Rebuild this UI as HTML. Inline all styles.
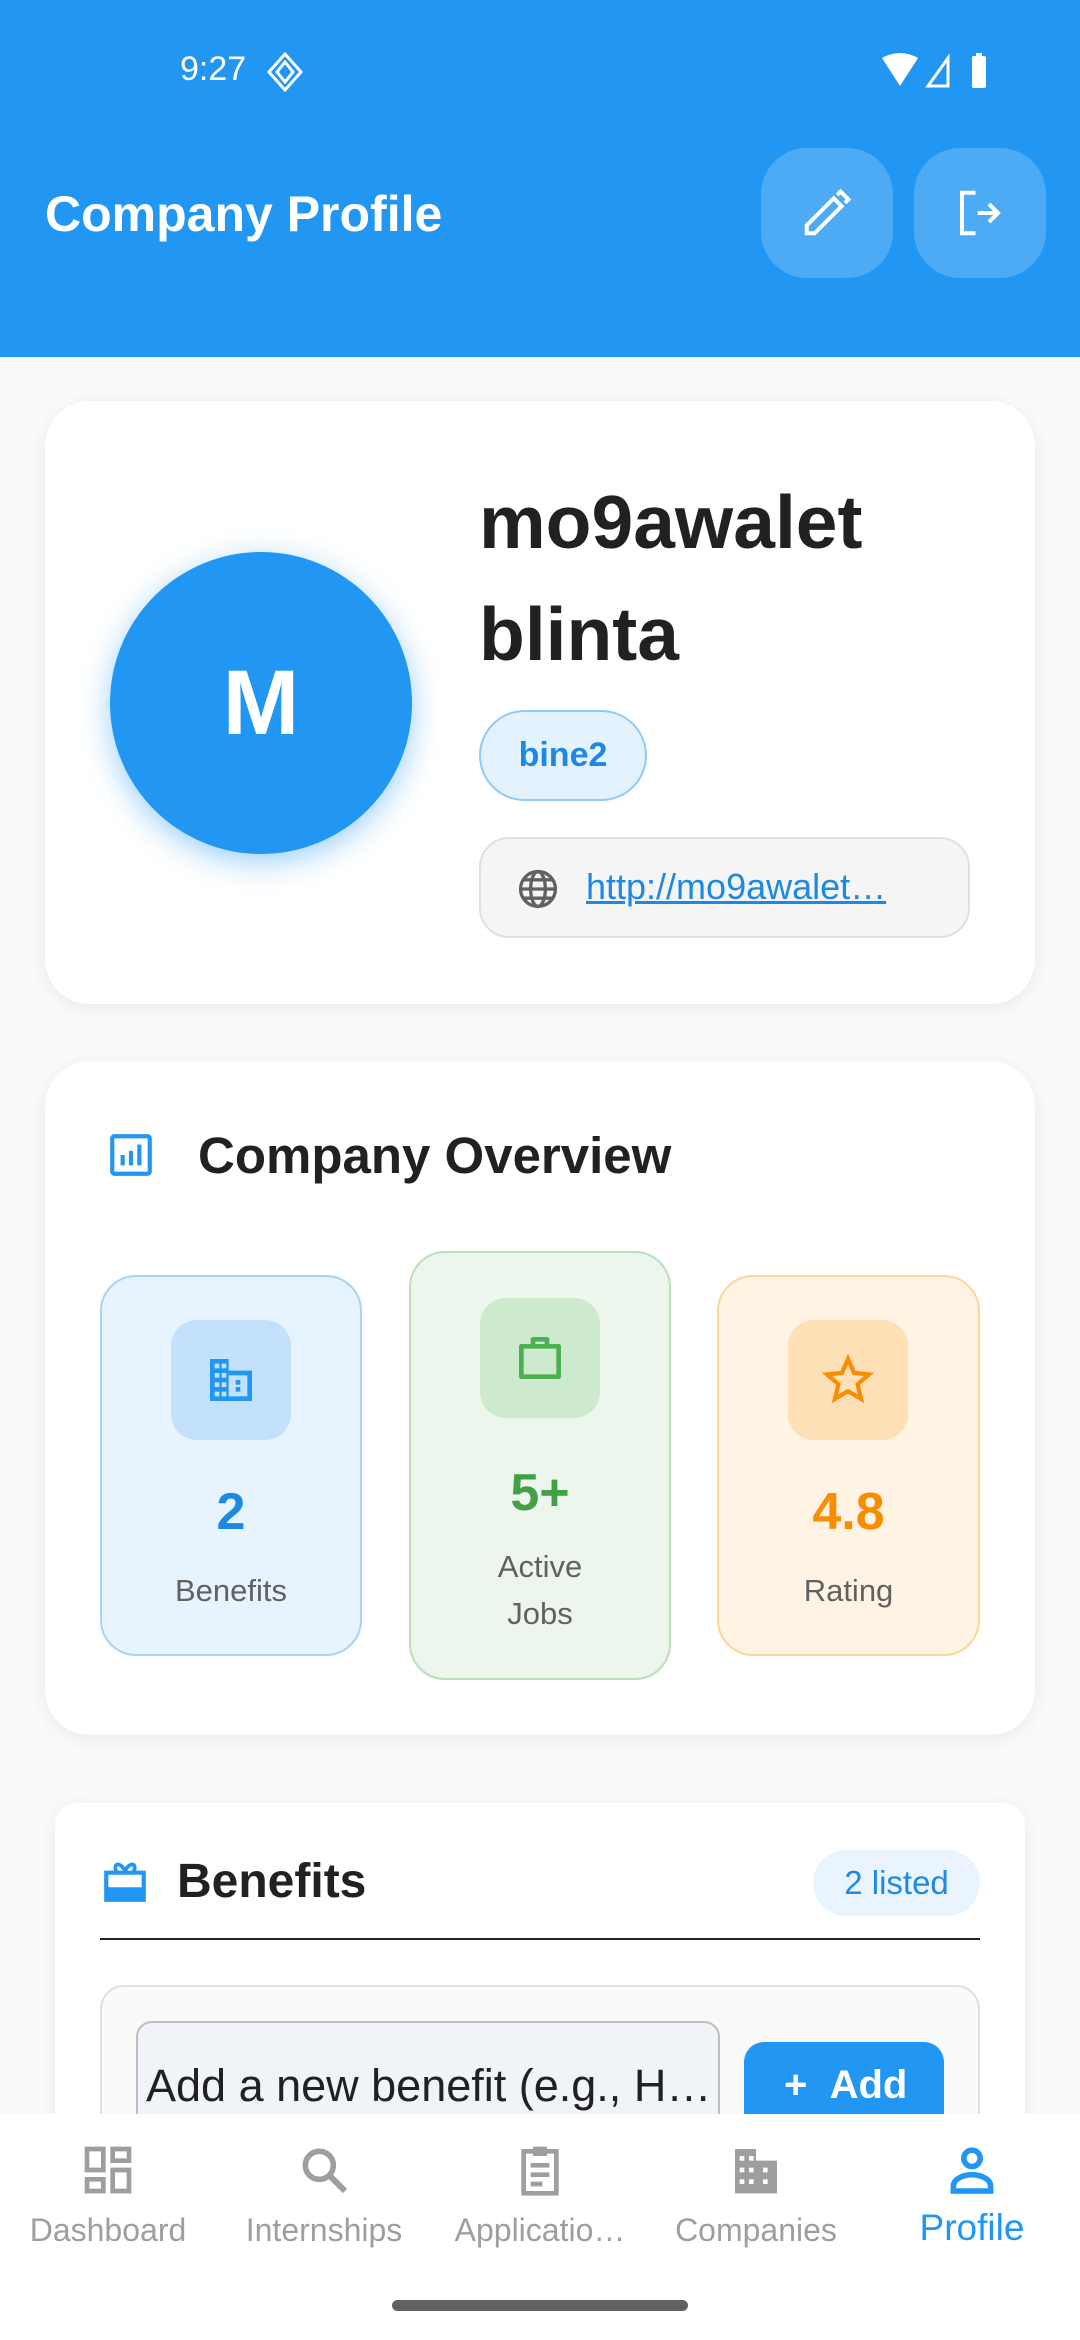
<!DOCTYPE html>
<html><head><meta charset="utf-8"><style>
*{margin:0;padding:0;box-sizing:border-box}
body{width:1080px;height:2340px;background:#FAFAFA;font-family:"Liberation Sans",sans-serif;position:relative;overflow:hidden}
.abs{position:absolute}
.hdr{left:0;top:0;width:1080px;height:357px;background:#2196F3}
.card{background:#fff;border-radius:45px;box-shadow:0 4px 18px rgba(0,0,0,0.07)}
.stat{border-radius:36px;border:2px solid;text-align:center}
.ib{position:absolute;width:120px;height:120px;border-radius:26px;left:69px;display:flex;align-items:center;justify-content:center}
.num{position:absolute;width:100%;font-weight:bold;font-size:52px}
.lbl{position:absolute;width:100%;font-size:31px;color:#616161;line-height:47px}
.nav{left:0;top:2114px;width:1080px;height:226px;background:#fff}
.ni{position:absolute;width:216px;text-align:center;top:0}
.ni svg{position:absolute;left:80px;top:28px}
.ni span{position:absolute;left:0;width:216px;top:98px;font-size:32px;color:#9E9E9E}
</style></head><body>
<div class="abs hdr"></div>
<div class="abs" style="left:180px;top:50px;color:#fff;font-size:34px">9:27</div>
<svg class="abs" style="left:265px;top:52px" width="40" height="40" viewBox="0 0 40 40"><path d="M20 2 L36 20 L20 38 L4 20Z M20 10 L28 20 L20 30 L12 20Z" fill="none" stroke="#fff" stroke-width="3"/></svg>
<svg class="abs" style="left:880px;top:52px" width="120" height="38" viewBox="0 0 120 38"><path d="M2 6 Q20 -4 38 6 L20 34Z" fill="#fff"/><path d="M48 34 L68 6 L68 34Z" fill="none" stroke="#fff" stroke-width="3"/><rect x="92" y="4" width="14" height="32" rx="2" fill="#fff"/><rect x="96" y="1" width="6" height="4" fill="#fff"/></svg>
<div class="abs" style="left:45px;top:185px;color:#fff;font-size:50px;font-weight:bold">Company Profile</div>
<div class="abs" style="left:761px;top:148px;width:132px;height:130px;border-radius:46px;background:rgba(255,255,255,0.2)"></div>
<div class="abs" style="left:914px;top:148px;width:132px;height:130px;border-radius:46px;background:rgba(255,255,255,0.2)"></div>
<svg class="abs" style="left:800px;top:186px" width="54" height="54" viewBox="0 0 24 24"><path d="M3 21v-3.5L15 5.5l3.5 3.5L6.5 21Z M16.5 4l1.5-1.5 3.5 3.5-1.5 1.5" fill="none" stroke="#fff" stroke-width="1.8"/></svg>
<svg class="abs" style="left:953px;top:186px" width="54" height="54" viewBox="0 0 24 24"><path d="M10 3H4v18h6 M11 12h9 M16 8l4 4-4 4" fill="none" stroke="#fff" stroke-width="1.8"/></svg>

<div class="abs card" style="left:45px;top:401px;width:990px;height:603px"></div>
<div class="abs" style="left:110px;top:552px;width:302px;height:302px;border-radius:50%;background:#2196F3;box-shadow:0 8px 30px rgba(33,150,243,0.45);color:#fff;font-size:92px;font-weight:bold;text-align:center;line-height:302px">M</div>
<div class="abs" style="left:479px;top:466px;font-size:75px;font-weight:bold;color:#212121;line-height:112px">mo9awalet<br>blinta</div>
<div class="abs" style="left:479px;top:710px;width:168px;height:91px;border-radius:46px;background:#E3F2FD;border:2px solid #90CAF9;color:#1E88E5;font-size:34px;font-weight:bold;text-align:center;line-height:87px">bine2</div>
<div class="abs" style="left:479px;top:837px;width:491px;height:101px;border-radius:30px;background:#F5F5F5;border:2px solid #E0E0E0"></div>
<svg class="abs" style="left:516px;top:867px" width="44" height="44" viewBox="0 0 24 24"><g fill="none" stroke="#616161" stroke-width="1.8"><circle cx="12" cy="12" r="9.5"/><ellipse cx="12" cy="12" rx="4" ry="9.5"/><path d="M2.5 12h19 M4 7h16 M4 17h16"/></g></svg>
<div class="abs" style="left:586px;top:866px;font-size:36px;color:#1E88E5;text-decoration:underline">http://mo9awalet…</div>

<div class="abs card" style="left:45px;top:1061px;width:990px;height:674px"></div>
<svg class="abs" style="left:106px;top:1130px" width="50" height="50" viewBox="0 0 24 24"><g fill="none" stroke="#2196F3" stroke-width="2"><rect x="3" y="3" width="18" height="18" rx="1"/></g><g fill="#2196F3"><rect x="7" y="12" width="2" height="5"/><rect x="11" y="10" width="2" height="7"/><rect x="15" y="7" width="2" height="10"/></g></svg>
<div class="abs" style="left:198px;top:1126px;font-size:51px;font-weight:bold;color:#212121">Company Overview</div>

<div class="abs stat" style="left:100px;top:1275px;width:262px;height:381px;background:#E7F3FD;border-color:#A6D3F8">
<div class="ib" style="top:43px;background:#C3E1FB"><svg width="56" height="56" viewBox="0 0 24 24"><path d="M3 3h8v5h10v13H3Z" fill="#2196F3"/><g fill="#C3E1FB"><rect x="5" y="5" width="2" height="2"/><rect x="8" y="5" width="2" height="2"/><rect x="5" y="9" width="2" height="2"/><rect x="8" y="9" width="2" height="2"/><rect x="5" y="13" width="2" height="2"/><rect x="8" y="13" width="2" height="2"/><rect x="5" y="17" width="2" height="2"/><rect x="8" y="17" width="2" height="2"/><rect x="11" y="10" width="8" height="9"/></g><g fill="#2196F3"><rect x="14" y="12" width="2" height="2"/><rect x="14" y="15" width="2" height="2"/></g></svg></div>
<div class="num" style="top:205px;color:#1E88E5">2</div>
<div class="lbl" style="top:290px">Benefits</div></div>

<div class="abs stat" style="left:409px;top:1251px;width:262px;height:429px;background:#ECF6EC;border-color:#B9E0BA">
<div class="ib" style="top:45px;background:#CDEACE"><svg width="56" height="56" viewBox="0 0 24 24"><path d="M4 7h16v13H4Z M9 7V4h6v3" fill="none" stroke="#4CAF50" stroke-width="2" stroke-linejoin="round"/></svg></div>
<div class="num" style="top:210px;color:#43A047">5+</div>
<div class="lbl" style="top:290px">Active<br>Jobs</div></div>

<div class="abs stat" style="left:717px;top:1275px;width:263px;height:381px;background:#FFF3E3;border-color:#FFD699">
<div class="ib" style="top:43px;background:#FDE0B6"><svg width="56" height="56" viewBox="0 0 24 24"><path d="M12 3l2.6 6 6.4.6-4.9 4.2 1.5 6.3L12 16.8 6.4 20.1l1.5-6.3L3 9.6 9.4 9Z" fill="none" stroke="#FB8C00" stroke-width="1.8"/></svg></div>
<div class="num" style="top:205px;color:#FB8C00">4.8</div>
<div class="lbl" style="top:290px">Rating</div></div>

<div class="abs card" style="left:55px;top:1803px;width:970px;height:400px;border-radius:22px"></div>
<svg class="abs" style="left:100px;top:1856px" width="50" height="50" viewBox="0 0 24 24"><path d="M3 8h18v13H3Z" fill="none" stroke="#2196F3" stroke-width="2"/><rect x="3" y="15" width="18" height="6" fill="#2196F3"/><path d="M8 8C6 4 9 2 12 7C15 2 18 4 16 8" fill="none" stroke="#2196F3" stroke-width="1.8"/></svg>
<div class="abs" style="left:177px;top:1854px;font-size:48px;font-weight:bold;color:#212121">Benefits</div>
<div class="abs" style="left:813px;top:1850px;width:167px;height:66px;border-radius:33px;background:#EAF4FE;color:#1E88E5;font-size:33px;text-align:center;line-height:66px">2 listed</div>
<div class="abs" style="left:100px;top:1938px;width:880px;height:2px;background:#212121"></div>
<div class="abs" style="left:100px;top:1985px;width:880px;height:250px;border-radius:24px;background:#FAFAFA;border:2px solid #E0E0E0"></div>
<div class="abs" style="left:136px;top:2021px;width:584px;height:150px;border-radius:16px;background:#F0F4F8;border:2px solid #BDBDBD"></div>
<div class="abs" style="left:146px;top:2060px;font-size:45px;color:#212121">Add a new benefit (e.g., H…</div>
<div class="abs" style="left:744px;top:2042px;width:200px;height:120px;border-radius:20px;background:#2196F3;color:#fff;font-size:40px;font-weight:bold;line-height:86px;padding-left:40px">+&nbsp;&nbsp;Add</div>

<div class="abs nav">
<div class="ni" style="left:0"><svg width="56" height="56" viewBox="0 0 24 24"><path d="M3 3h7v9H3Z M14 3h7v5h-7Z M14 12h7v9h-7Z M3 16h7v5H3Z" fill="none" stroke="#9E9E9E" stroke-width="2"/></svg><span>Dashboard</span></div>
<div class="ni" style="left:216px"><svg width="56" height="56" viewBox="0 0 24 24"><circle cx="10" cy="10" r="6" fill="none" stroke="#9E9E9E" stroke-width="2.4"/><path d="M14.5 14.5L21 21" stroke="#9E9E9E" stroke-width="2.6"/></svg><span>Internships</span></div>
<div class="ni" style="left:432px"><svg width="56" height="56" viewBox="0 0 24 24"><path d="M5 4h14v18H5Z" fill="none" stroke="#9E9E9E" stroke-width="2"/><rect x="9" y="2" width="6" height="4" fill="#9E9E9E"/><path d="M8 10h8M8 14h8M8 18h5" stroke="#9E9E9E" stroke-width="2"/></svg><span>Applicatio…</span></div>
<div class="ni" style="left:648px"><svg width="56" height="56" viewBox="0 0 24 24"><path d="M3 3h9v5h9v14H3Z" fill="#9E9E9E"/><g fill="#fff"><rect x="5" y="6" width="2" height="2"/><rect x="9" y="6" width="2" height="2"/><rect x="5" y="11" width="2" height="2"/><rect x="9" y="11" width="2" height="2"/><rect x="5" y="16" width="2" height="2"/><rect x="9" y="16" width="2" height="2"/><rect x="15" y="11" width="2" height="2"/><rect x="15" y="16" width="2" height="2"/></g></svg><span>Companies</span></div>
<div class="ni" style="left:864px"><svg width="56" height="56" viewBox="0 0 24 24"><circle cx="12" cy="7" r="3.5" fill="none" stroke="#2196F3" stroke-width="2.4"/><path d="M4 21v-2c0-3 4-5 8-5s8 2 8 5v2Z" fill="none" stroke="#2196F3" stroke-width="2.4"/></svg><span style="color:#2196F3;font-size:37px;top:93px">Profile</span></div>
</div>
<div class="abs" style="left:392px;top:2300px;width:296px;height:11px;border-radius:6px;background:#616161"></div>
</body></html>
